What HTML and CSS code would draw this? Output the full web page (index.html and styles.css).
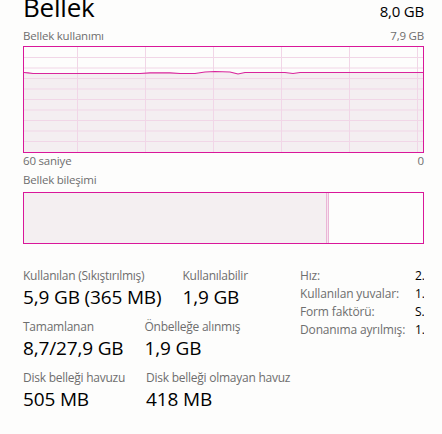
FILE: index.html
```html
<!DOCTYPE html>
<html lang="tr">
<head>
<meta charset="utf-8">
<title>Bellek</title>
<link rel="stylesheet" href="styles.css">
</head>
<body>
<div class="page">
  <header class="head">
    <h1 class="title">Bellek</h1>
    <span class="total">8,0 GB</span>
  </header>

  <div class="caprow first"><span>Bellek kullanımı</span><span>7,9 GB</span></div>
  <div class="graph">
    <svg class="chart" viewBox="0 0 399 105" width="399" height="105" preserveAspectRatio="none">
      <polygon class="area" points="0,25.5 4,25.8 9,26.5 116,26.5 126,25.8 146,25.8 156,26.5 171,26.5 181,25 191,24.5 206,25 214,27 221,25.5 261,25.5 269,26.5 276,25.5 399,25.5 399,105 0,105"/>
      <g class="grid">
        <line x1="0" y1="10.5" x2="399" y2="10.5"/>
        <line x1="0" y1="21" x2="399" y2="21"/>
        <line x1="0" y1="31.5" x2="399" y2="31.5"/>
        <line x1="0" y1="42" x2="399" y2="42"/>
        <line x1="0" y1="52.5" x2="399" y2="52.5"/>
        <line x1="0" y1="63" x2="399" y2="63"/>
        <line x1="0" y1="73.5" x2="399" y2="73.5"/>
        <line x1="0" y1="84" x2="399" y2="84"/>
        <line x1="0" y1="94.5" x2="399" y2="94.5"/>
        <line x1="53.5" y1="0" x2="53.5" y2="105"/>
        <line x1="121.5" y1="0" x2="121.5" y2="105"/>
        <line x1="189.5" y1="0" x2="189.5" y2="105"/>
        <line x1="257.5" y1="0" x2="257.5" y2="105"/>
        <line x1="325.5" y1="0" x2="325.5" y2="105"/>
        <line x1="393.5" y1="0" x2="393.5" y2="105"/>
      </g>
      <polyline class="usage" points="0,25.5 4,25.8 9,26.5 116,26.5 126,25.8 146,25.8 156,26.5 171,26.5 181,25 191,24.5 206,25 214,27 221,25.5 261,25.5 269,26.5 276,25.5 399,25.5"/>
    </svg>
  </div>
  <div class="caprow"><span>60 saniye</span><span>0</span></div>

  <div class="caprow second"><span>Bellek bileşimi</span></div>
  <div class="comp">
    <div class="inuse"></div>
    <div class="modified"></div>
    <div class="free"></div>
  </div>

  <section class="stats">
    <div class="left">
      <div class="row">
        <div class="stat"><div class="lbl">Kullanılan (Sıkıştırılmış)</div><div class="val">5,9 GB (365 MB)</div></div>
        <div class="stat"><div class="lbl">Kullanılabilir</div><div class="val">1,9 GB</div></div>
      </div>
      <div class="row">
        <div class="stat"><div class="lbl">Tamamlanan</div><div class="val">8,7/27,9 GB</div></div>
        <div class="stat"><div class="lbl">Önbelleğe alınmış</div><div class="val">1,9 GB</div></div>
      </div>
      <div class="row">
        <div class="stat"><div class="lbl">Disk belleği havuzu</div><div class="val">505 MB</div></div>
        <div class="stat"><div class="lbl">Disk belleği olmayan havuz</div><div class="val">418 MB</div></div>
      </div>
    </div>
    <dl class="right">
      <dt>Hız:</dt><dd>2.</dd>
      <dt>Kullanılan yuvalar:</dt><dd>1.</dd>
      <dt>Form faktörü:</dt><dd>S.</dd>
      <dt>Donanıma ayrılmış:</dt><dd>1.</dd>
    </dl>
  </section>
</div>
</body>
</html>
```

FILE: styles.css
```css
html, body {
  margin: 0;
  padding: 0;
  background: #fdfdfc;
  overflow: hidden;
}
body {
  font-family: "Open Sans", "Noto Sans", sans-serif;
  color: #000;
  width: 442px;
  height: 434px;
}
.page {
  padding: 0 18px 0 23px;
}
.head {
  display: flex;
  justify-content: space-between;
  align-items: baseline;
  margin-top: -10px;
  height: 30px;
}
.title {
  margin: 0;
  font-size: 26px;
  line-height: 34px;
  font-weight: 400;
  letter-spacing: -0.2px;
}
.total {
  font-size: 15px;
  line-height: 20px;
  letter-spacing: -0.2px;
}
.caprow {
  display: flex;
  justify-content: space-between;
  font-size: 11.5px;
  line-height: 16px;
  color: #6e6e6e;
  letter-spacing: -0.2px;
}
.caprow.first { margin-top: 8px; }
.caprow.second { margin-top: 3px; }
.graph {
  margin-top: 2px;
  width: 399px;
  height: 105px;
  border: 1px solid #d9179a;
}
.chart { display: block; }
.area { fill: #f4eef1; }
.grid line {
  stroke: #f1d6e7;
  stroke-width: 1;
}
.usage {
  fill: none;
  stroke: #d9259c;
  stroke-width: 1.2;
}
.comp {
  margin-top: 4px;
  height: 50px;
  width: 399px;
  border: 1px solid #d9179a;
  display: flex;
}
.inuse {
  width: 302px;
  background: #f4eff1;
}
.modified {
  width: 1px;
  border-left: 1px solid #eab6d6;
  border-right: 1px solid #eab6d6;
  background: #f6e4ef;
}
.free {
  flex: 1;
  background: #fdfdfc;
}
.stats {
  margin-top: 24px;
  display: grid;
  grid-template-columns: 277px 1fr;
  align-items: start;
}
.left {
  display: flex;
  flex-direction: column;
  gap: 9px;
}
.row {
  display: flex;
  gap: 21px;
}
.lbl {
  font-size: 12px;
  line-height: 16px;
  color: #6e6e6e;
  letter-spacing: -0.25px;
  white-space: nowrap;
}
.val {
  margin-top: 0;
  font-size: 19px;
  line-height: 26px;
  letter-spacing: -0.15px;
  white-space: nowrap;
}
.right {
  margin: -1px 0 0 0;
  display: grid;
  grid-template-columns: 115px 1fr;
  align-content: start;
  font-size: 12px;
  line-height: 18px;
  letter-spacing: -0.15px;
  overflow: hidden;
}
.right dt {
  color: #6e6e6e;
  white-space: nowrap;
}
.right dd {
  margin: 0;
  color: #000;
  white-space: nowrap;
}
```
